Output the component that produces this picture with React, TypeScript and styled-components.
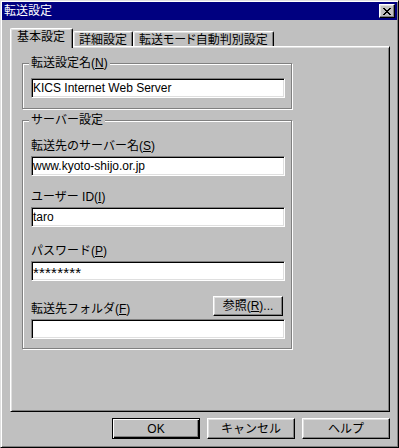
import styled, { createGlobalStyle } from "styled-components";

const GlobalStyle = createGlobalStyle`
  html, body {
    margin: 0;
    padding: 0;
    background: #c0c0c0;
  }
  body {
    font-family: "Liberation Sans", "Noto Sans CJK JP", sans-serif;
    font-size: 12px;
    line-height: 14px;
    color: #000;
  }
  * {
    box-sizing: border-box;
  }
`;

const Window = styled.div`
  width: 399px;
  height: 448px;
  display: flex;
  flex-direction: column;
  padding: 1px;
  background: #c0c0c0;
  border: 1px solid;
  border-color: #dfdfdf #000 #000 #dfdfdf;
  box-shadow: inset 1px 1px #fff, inset -1px -1px #808080;
`;

const TitleBar = styled.div`
  height: 18px;
  display: flex;
  align-items: center;
  justify-content: space-between;
  padding: 0 2px;
  background: #000080;
  color: #fff;
`;

const TitleText = styled.span`
  line-height: 18px;
`;

const CloseButton = styled.button`
  width: 16px;
  height: 14px;
  padding: 0;
  display: flex;
  align-items: center;
  justify-content: center;
  background: #c0c0c0;
  border: 1px solid;
  border-color: #fff #000 #000 #fff;
  box-shadow: inset -1px -1px #808080, inset 1px 1px #dfdfdf;
`;

const Body = styled.div`
  flex: 1;
  display: flex;
  flex-direction: column;
  padding: 8px 7px 7px 8px;
`;

const TabRow = styled.div`
  height: 18px;
  display: flex;
  align-items: flex-end;
  position: relative;
  z-index: 1;
`;

const Tab = styled.div<{ $active?: boolean }>`
  height: ${({ $active }) => ($active ? "20px" : "15px")};
  margin-bottom: ${({ $active }) => ($active ? "-2px" : "0")};
  padding: ${({ $active }) => ($active ? "0 7px 3px 6px" : "1px 5px 0")};
  display: flex;
  align-items: center;
  white-space: nowrap;
  font-feature-settings: "palt";
  background: #c0c0c0;
  border-top: 1px solid #fff;
  border-left: 1px solid #fff;
  border-right: 1px solid #000;
  border-radius: 2px 2px 0 0;
  box-shadow: inset -1px 0 #808080, inset 1px 1px #dfdfdf;
`;

const Panel = styled.div`
  flex: 1;
  padding: 9px 0 0 11px;
  border: 1px solid;
  border-color: #fff #000 #000 #fff;
  box-shadow: inset 1px 1px #dfdfdf, inset -1px -1px #808080;
`;

const Group = styled.fieldset<{ $top?: number; $padTop: number; $padBottom: number }>`
  width: 270px;
  min-width: 0;
  margin: ${({ $top }) => $top ?? 0}px 0 0 0;
  padding: ${({ $padTop, $padBottom }) => `${$padTop}px 6px ${$padBottom}px 8px`};
  border: 1px solid #808080;
  box-shadow: 1px 1px #fff, inset 1px 1px #fff;
`;

const Legend = styled.legend`
  margin-left: -2px;
  padding: 0 2px;
  line-height: 14px;
  background: #c0c0c0;
`;

const Label = styled.label<{ $top?: number }>`
  display: block;
  margin-top: ${({ $top }) => $top ?? 0}px;
  margin-bottom: 3px;
  line-height: 14px;
  white-space: nowrap;
`;

const TextBox = styled.input`
  display: block;
  width: 254px;
  height: 20px;
  margin: 0;
  padding: 0 1px;
  font: inherit;
  color: #000;
  background: #fff;
  outline: none;
  border: 1px solid;
  border-color: #808080 #fff #fff #808080;
  box-shadow: inset 1px 1px #000, inset -1px -1px #dfdfdf;
`;

const Secret = styled(TextBox)`
  font-size: 15px;
  letter-spacing: 0.2px;
  padding-top: 3px;
`;

const FolderRow = styled.div`
  width: 254px;
  margin-top: 15px;
  margin-bottom: 3px;
  display: flex;
  align-items: flex-end;
  justify-content: space-between;

  & > label {
    margin-bottom: 0;
  }
`;

const PushButton = styled.button<{ $default?: boolean; $width: number; $height: number }>`
  width: ${({ $width }) => $width}px;
  height: ${({ $height }) => $height}px;
  margin: 0;
  padding: 0;
  font: inherit;
  color: #000;
  background: #c0c0c0;
  white-space: nowrap;
  border: 1px solid;
  border-color: ${({ $default }) => ($default ? "#000" : "#fff #000 #000 #fff")};
  box-shadow: ${({ $default }) =>
    $default
      ? "inset 1px 1px #fff, inset -1px -1px #000, inset -2px -2px #808080"
      : "inset -1px -1px #808080, inset 1px 1px #dfdfdf"};
`;

const BrowseButton = styled(PushButton)`
  margin-right: 2px;
`;

const ButtonRow = styled.div`
  margin-top: 6px;
  display: flex;
  justify-content: flex-end;
  gap: 7px;
`;

const CloseGlyph = () => (
  <svg width="8" height="7" viewBox="0 0 8 7" shapeRendering="crispEdges">
    <path
      d="M0 0h2v1H0zM6 0h2v1H6zM1 1h2v1H1zM5 1h2v1H5zM2 2h4v1H2zM3 3h2v1H3zM2 4h4v1H2zM1 5h2v1H1zM5 5h2v1H5zM0 6h2v1H0zM6 6h2v1H6z"
      fill="#000"
    />
  </svg>
);

export default function App() {
  return (
    <>
      <GlobalStyle />
      <Window>
        <TitleBar>
          <TitleText>転送設定</TitleText>
          <CloseButton aria-label="閉じる">
            <CloseGlyph />
          </CloseButton>
        </TitleBar>
        <Body>
          <TabRow>
            <Tab $active>基本設定</Tab>
            <Tab>詳細設定</Tab>
            <Tab>転送モード自動判別設定</Tab>
          </TabRow>
          <Panel>
            <Group $padTop={8} $padBottom={10}>
              <Legend>
                転送設定名(<u>N</u>)
              </Legend>
              <TextBox defaultValue="KICS Internet Web Server" />
            </Group>
            <Group $top={4} $padTop={12} $padBottom={9}>
              <Legend>サーバー設定</Legend>
              <Label>
                転送先のサーバー名(<u>S</u>)
              </Label>
              <TextBox defaultValue="www.kyoto-shijo.or.jp" />
              <Label $top={14}>
                ユーザー ID(<u>I</u>)
              </Label>
              <TextBox defaultValue="taro" />
              <Label $top={17}>
                パスワード(<u>P</u>)
              </Label>
              <Secret defaultValue="********" />
              <FolderRow>
                <Label>
                  転送先フォルダ(<u>F</u>)
                </Label>
                <BrowseButton $width={70} $height={20}>
                  参照(<u>R</u>)...
                </BrowseButton>
              </FolderRow>
              <TextBox defaultValue="" />
            </Group>
          </Panel>
          <ButtonRow>
            <PushButton $default $width={88} $height={21}>
              OK
            </PushButton>
            <PushButton $width={88} $height={21}>
              キャンセル
            </PushButton>
            <PushButton $width={88} $height={21}>
              ヘルプ
            </PushButton>
          </ButtonRow>
        </Body>
      </Window>
    </>
  );
}
